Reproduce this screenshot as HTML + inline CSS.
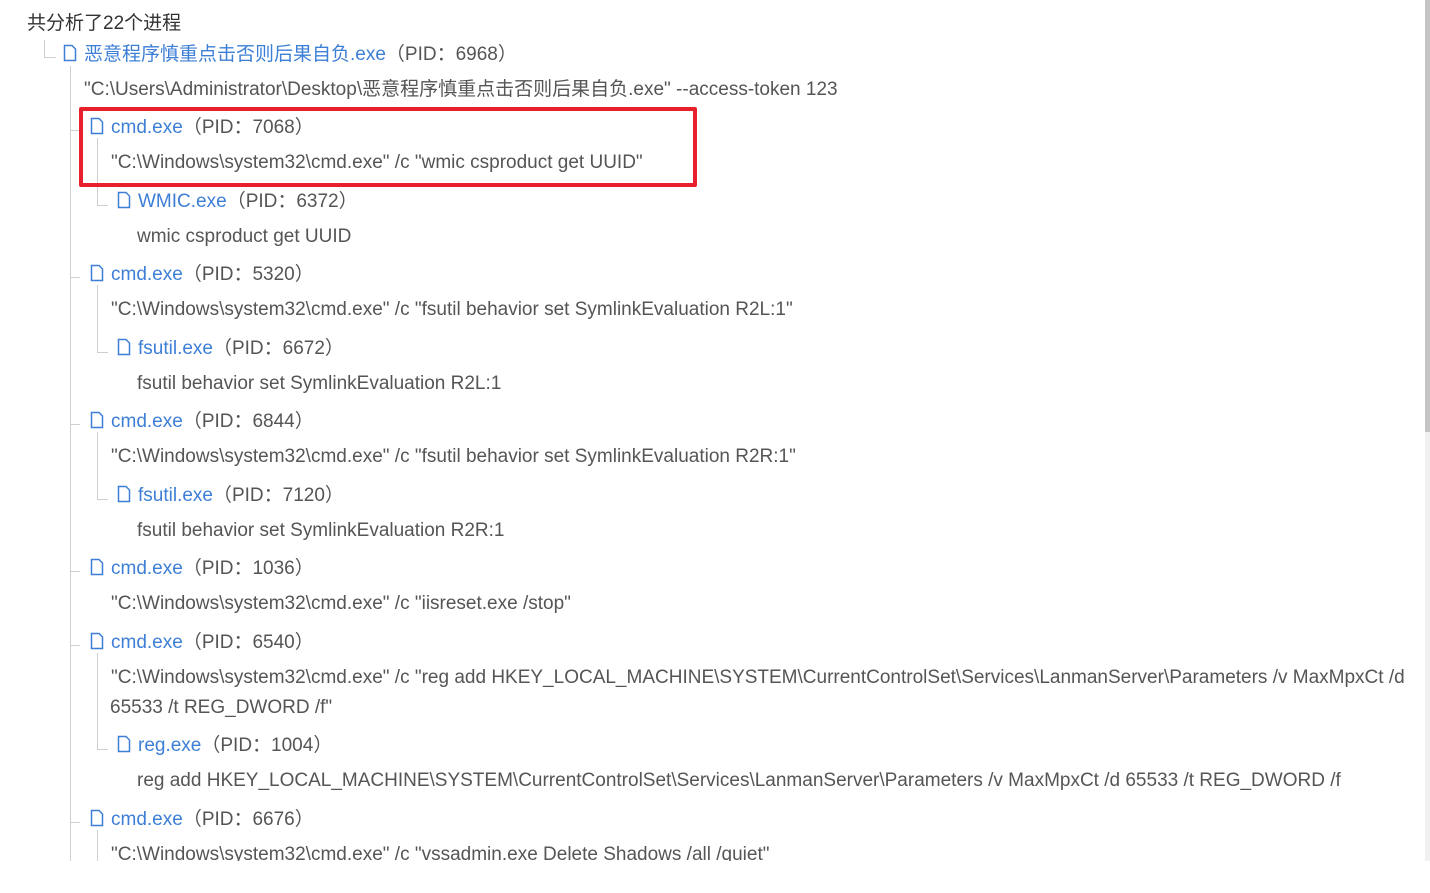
<!DOCTYPE html>
<html><head><meta charset="utf-8"><style>
html,body{margin:0;padding:0;background:#fff;}
body{width:1430px;height:893px;position:relative;overflow:hidden;font-family:"Liberation Sans","Noto Sans CJK SC",sans-serif;font-size:19px;color:#555;}
.clip{position:absolute;left:0;top:0;width:1425px;height:861px;overflow:hidden;}
.t{position:absolute;white-space:nowrap;line-height:24px;}
.n{color:#3d7fd6;}
.l{position:absolute;background:#cfcfcf;}
svg.i{position:absolute;width:14px;height:18px;}
</style></head><body>
<div class="clip">
<div class="t" style="left:27px;top:12px;color:#333">共分析了22个进程</div>

<div class="l" style="left:44px;top:40px;width:1px;height:18px"></div>
<div class="l" style="left:44px;top:57px;width:12px;height:1px"></div>
<div class="l" style="left:70px;top:66px;width:1px;height:800px"></div>
</div>
<div style="position:absolute;left:1425px;top:0;width:5px;height:861px;background:#f1f1f1"></div>
<div style="position:absolute;left:1425px;top:0;width:5px;height:432px;background:#c4c4c4"></div>
<div style="position:absolute;left:79px;top:107px;width:610px;height:72px;border:4px solid #e6212b;border-radius:2px"></div>
<script>
var c=document.querySelector('.clip'),h='';
function ic(x,y){return '<svg class="i" style="left:'+x+'px;top:'+(y-9)+'px" viewBox="0 0 14 18"><path d="M1.5 1.5H9L12.5 5V16.5H1.5Z" fill="none" stroke="#3d7fd6" stroke-width="1.5"/></svg>';}
function node(ix,y,name,pid){var tx=ix+21;h+=ic(ix,y)+'<div class="t" style="left:'+tx+'px;top:'+(y-10)+'px"><span class="n">'+name+'</span>（PID：'+pid+'）</div>';}
function txt(x,y,s){h+='<div class="t" style="left:'+x+'px;top:'+(y-10)+'px">'+s+'</div>';}
function hl(x,w,y){h+='<div class="l" style="left:'+x+'px;top:'+y+'px;width:'+w+'px;height:1px"></div>';}
function vl(x,y1,y2){h+='<div class="l" style="left:'+x+'px;top:'+y1+'px;width:1px;height:'+(y2-y1)+'px"></div>';}
node(63,53,'恶意程序慎重点击否则后果自负.exe','6968');
txt(84,88,'"C:\\Users\\Administrator\\Desktop\\恶意程序慎重点击否则后果自负.exe" --access-token 123');
var L2=[[126,'7068','"C:\\Windows\\system32\\cmd.exe" /c "wmic csproduct get UUID"',161,[200,'WMIC.exe','6372','wmic csproduct get UUID']],
[273,'5320','"C:\\Windows\\system32\\cmd.exe" /c "fsutil behavior set SymlinkEvaluation R2L:1"',308,[347,'fsutil.exe','6672','fsutil behavior set SymlinkEvaluation R2L:1']],
[420,'6844','"C:\\Windows\\system32\\cmd.exe" /c "fsutil behavior set SymlinkEvaluation R2R:1"',455,[494,'fsutil.exe','7120','fsutil behavior set SymlinkEvaluation R2R:1']],
[567,'1036','"C:\\Windows\\system32\\cmd.exe" /c "iisreset.exe /stop"',602,null],
[641,'6540','"C:\\Windows\\system32\\cmd.exe" /c "reg add HKEY_LOCAL_MACHINE\\SYSTEM\\CurrentControlSet\\Services\\LanmanServer\\Parameters /v MaxMpxCt /d',676,[744,'reg.exe','1004','reg add HKEY_LOCAL_MACHINE\\SYSTEM\\CurrentControlSet\\Services\\LanmanServer\\Parameters /v MaxMpxCt /d 65533 /t REG_DWORD /f']],
[818,'6676','"C:\\Windows\\system32\\cmd.exe" /c "vssadmin.exe Delete Shadows /all /quiet"',853,'end']];
L2.forEach(function(r){
 hl(70,10,r[0]+4);node(90,r[0],'cmd.exe',r[1]);txt(111,r[3],r[2]);
 if(r[0]==641)txt(110,706,'65533 /t REG_DWORD /f"');
 if(r[4]==='end'){vl(97,r[0]+12,870);}
 else if(r[4]){var k=r[4];vl(97,r[0]+12,k[0]+5);hl(97,11,k[0]+5);node(117,k[0],k[1],k[2]);txt(137,k[0]+35,k[3]);}
});
c.insertAdjacentHTML('beforeend',h);
</script>
</body></html>
